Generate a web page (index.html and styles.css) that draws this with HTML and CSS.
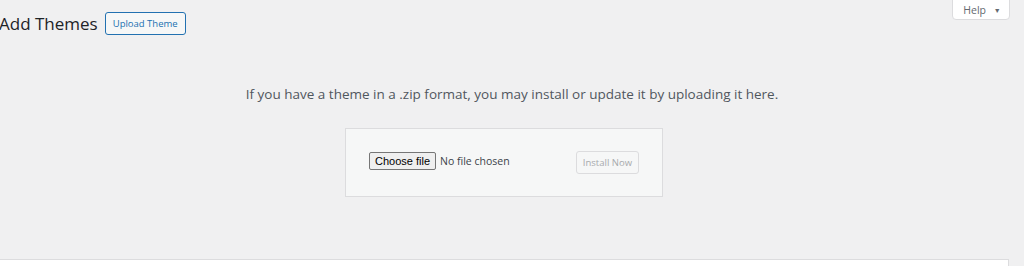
FILE: index.html
```html
<!DOCTYPE html>
<html lang="en-US">
<head>
	<meta charset="UTF-8">
	<meta name="viewport" content="width=device-width, initial-scale=1.0">
	<title>Add Themes</title>
	<link rel="stylesheet" href="styles.css">
</head>
<body>
	<div class="top">
		<h1 class="title">Add Themes</h1>
		<a class="title-action" href="#">Upload Theme</a>
		<button class="help-tab" type="button">Help <span class="arrow">&#9660;</span></button>
	</div>

	<div class="upload">
		<p class="install-help">If you have a theme in a .zip format, you may install or update it by uploading it here.</p>
		<form class="upload-form">
			<label class="file">
				<input class="file-input" type="file" name="themezip">
				<span class="file-btn">Choose file</span>
				<span class="file-name">No file chosen</span>
			</label>
			<button class="install" type="submit" disabled>Install Now</button>
		</form>
	</div>

	<div class="browser"></div>
</body>
</html>
```

FILE: styles.css
```css
body{
	margin: 0;
	background: #f0f0f1;
	font-family: "Open Sans", "Noto Sans", sans-serif;
	color: #3c434a;
	font-size: 13px;
	height: 266px;
	overflow: hidden;
	display: flex;
	flex-direction: column;
}

.top{
	display: flex;
	align-items: flex-start;
	height: 46px;
}

.title{
	margin: 9px 0 0 -1px;
	font-size: 17px;
	font-weight: 400;
	line-height: 30px;
	color: #1d2327;
}

.title-action{
	margin: 12px 0 0 7px;
	padding: 0 7px;
	height: 21px;
	line-height: 21px;
	border: 1px solid #2271b1;
	border-radius: 3px;
	background: #f6f7f7;
	color: #2271b1;
	font-size: 9.5px;
	text-decoration: none;
}

.help-tab{
	margin: -1px 14px 0 auto;
	width: 58px;
	height: 21px;
	padding: 0 0 0 2px;
	background: #fff;
	border: 1px solid #dcdcde;
	border-radius: 0 0 4px 4px;
	color: #646970;
	font-family: inherit;
	font-size: 10.5px;
}

.arrow{
	font-size: 7px;
	margin-left: 5px;
	vertical-align: 1px;
}

.upload{
	display: flex;
	flex-direction: column;
	align-items: center;
}

.install-help{
	margin: 38px 0 0;
	font-size: 13.5px;
	line-height: 20px;
	color: #50575e;
}

.upload-form{
	margin: 24px 16px 0 0;
	display: flex;
	align-items: center;
	width: 270px;
	padding: 22px 23px;
	background: #f6f7f7;
	border: 1px solid #dcdcde;
}

.file{
	display: flex;
	align-items: center;
	gap: 4px;
	margin-top: -3px;
	cursor: pointer;
}

.file-input{
	display: none;
}

.file-btn{
	height: 16px;
	line-height: 16px;
	padding: 0 5px;
	background: #efefef;
	border: 1px solid #767676;
	border-radius: 2px;
	color: #000;
	font-family: "Liberation Sans", Arial, sans-serif;
	font-size: 11px;
}

.file-name{
	font-size: 10.5px;
	color: #3c434a;
}

.install{
	margin-left: auto;
	height: 23px;
	padding: 0 6px;
	border: 1px solid #dcdcde;
	border-radius: 3px;
	background: #f6f7f7;
	color: #a7aaad;
	font-family: inherit;
	font-size: 9.5px;
}

.browser{
	margin-top: 62px;
	width: 1008px;
	flex: 1;
	background: #fff;
	border-top: 1px solid #dcdcde;
	border-right: 1px solid #dcdcde;
}
```
